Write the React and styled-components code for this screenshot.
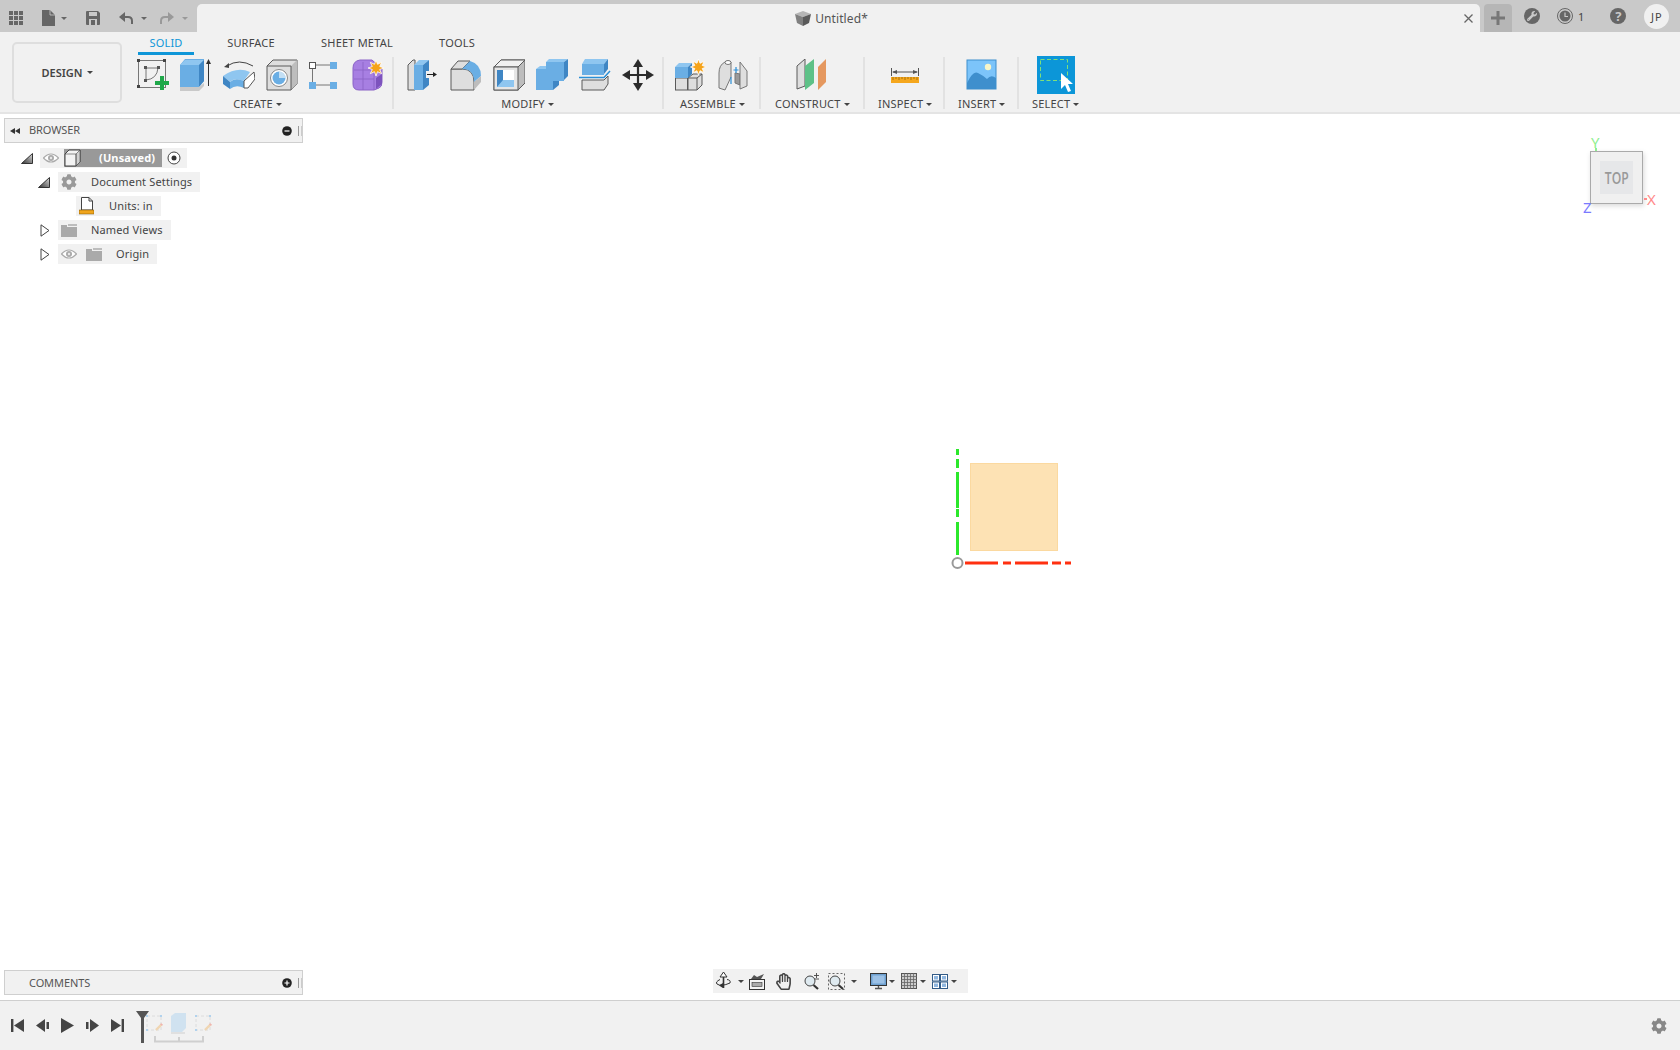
import React from 'react';
import styled, { createGlobalStyle } from 'styled-components';
import { FaCog, FaWrench, FaRegHandPaper } from 'react-icons/fa';

const GlobalStyle = createGlobalStyle`
  html, body {
    margin: 0;
    padding: 0;
    background: #ffffff;
    font-family: "Noto Sans", "Open Sans", sans-serif;
  }
`;

const Page = styled.div`
  width: 1680px;
  height: 1050px;
  display: flex;
  flex-direction: column;
  overflow: hidden;
  color: #444;
`;

/* top bar */
const TitleBar = styled.div`
  height: 32px;
  flex: none;
  background: #c9c9c9;
  display: flex;
  align-items: flex-end;
`;

const QuickTools = styled.div`
  width: 197px;
  height: 28px;
  flex: none;
  display: flex;
  align-items: center;
  padding-left: 9px;
  box-sizing: border-box;
`;

const QuickGroup = styled.div`
  display: flex;
  align-items: center;
  gap: 6px;
  margin-left: ${(p) => p.$ml || 0}px;
`;

const DocTab = styled.div`
  width: 1283px;
  height: 28px;
  flex: none;
  background: #f1f1f1;
  border-radius: 5px 5px 0 0;
  display: flex;
  align-items: center;
`;

const TabSide = styled.div`
  flex: 1;
  display: flex;
  justify-content: flex-end;
  padding-right: 6px;
`;

const DocTitle = styled.div`
  display: flex;
  align-items: center;
  gap: 4px;
  font-size: 12px;
  letter-spacing: 0.1px;
  color: #555;
  margin-right: 14px;
`;

const NewTab = styled.div`
  width: 28px;
  height: 28px;
  flex: none;
  margin-left: 4px;
  background: #b6b6b6;
  border-radius: 4px 4px 0 0;
  display: flex;
  align-items: center;
  justify-content: center;
`;

const BarRight = styled.div`
  flex: 1;
  height: 32px;
  display: flex;
  align-items: center;
`;

const RoundIcon = styled.div`
  width: 16px;
  height: 16px;
  border-radius: 50%;
  background: #666;
  color: #c9c9c9;
  display: flex;
  align-items: center;
  justify-content: center;
  font-size: 13px;
  font-weight: 700;
  margin-left: ${(p) => p.$ml}px;
`;

const JobCount = styled.div`
  display: flex;
  align-items: center;
  gap: 5px;
  margin-left: 17px;
  font-size: 11px;
  color: #444;
`;

const Avatar = styled.div`
  width: 25px;
  height: 25px;
  border-radius: 50%;
  background: #f0f0f0;
  margin-left: 18px;
  display: flex;
  align-items: center;
  justify-content: center;
  font-size: 11px;
  letter-spacing: 1px;
  color: #444;
`;

/* ribbon */
const Ribbon = styled.div`
  height: 82px;
  flex: none;
  box-sizing: border-box;
  background: #f1f1f1;
  border-bottom: 2px solid #e4e4e4;
  display: flex;
  padding-left: 12px;
`;

const WorkspaceButton = styled.div`
  width: 110px;
  height: 61px;
  margin-top: 10px;
  box-sizing: border-box;
  border: 2px solid #dedede;
  border-radius: 5px;
  display: flex;
  align-items: center;
  justify-content: center;
  gap: 4px;
  font-size: 11px;
  font-weight: 600;
  color: #444;
`;

const RibbonMain = styled.div`
  display: flex;
  flex-direction: column;
  margin-left: 7px;
`;

const TabRow = styled.div`
  height: 23px;
  display: flex;
  padding-left: 9px;
`;

const RibbonTab = styled.div`
  width: ${(p) => p.$w}px;
  margin-right: ${(p) => p.$mr}px;
  box-sizing: border-box;
  text-align: center;
  font-size: 11px;
  letter-spacing: 0.2px;
  line-height: 21px;
  color: ${(p) => (p.$active ? '#0e96d8' : '#444')};
  border-bottom: 3px solid ${(p) => (p.$active ? '#0e96d8' : 'transparent')};
`;

const GroupRow = styled.div`
  display: flex;
  margin-top: 2px;
`;

const ToolGroup = styled.div`
  width: ${(p) => p.$w}px;
  height: 52px;
  box-sizing: border-box;
  padding-left: ${(p) => p.$pl}px;
  border-right: ${(p) => (p.$last ? 'none' : '2px solid #e2e2e2')};
  display: flex;
  flex-direction: column;
  align-items: flex-start;
`;

const ToolStack = styled.div`
  display: flex;
  flex-direction: column;
  align-items: center;
`;

const ToolIcons = styled.div`
  height: ${(p) => (p.$tall ? 38 : 36)}px;
  display: flex;
  align-items: center;
  gap: 11px;
  margin-top: ${(p) => (p.$tall ? -1 : 0)}px;
`;

const GroupLabel = styled.div`
  display: flex;
  align-items: center;
  gap: 3px;
  margin-top: ${(p) => (p.$tall ? 2 : 3)}px;
  margin-right: ${(p) => p.$mr || 0}px;
  font-size: 11px;
  letter-spacing: 0.2px;
  line-height: 16px;
  color: #444;
`;

const Caret = styled.span`
  width: 0;
  height: 0;
  flex: none;
  margin-left: ${(p) => p.$ml || 0}px;
  border-left: ${(p) => p.$s || 3}px solid transparent;
  border-right: ${(p) => p.$s || 3}px solid transparent;
  border-top: ${(p) => p.$s || 3}px solid ${(p) => p.$c || '#444'};
`;

/* canvas */
const Canvas = styled.div`
  flex: 1;
  position: relative;
  display: flex;
  flex-direction: column;
  justify-content: space-between;
  background: #ffffff;
`;

const SidePanel = styled.div`
  width: 299px;
  margin-left: 4px;
  margin-top: ${(p) => p.$mt || 0}px;
  display: flex;
  flex-direction: column;
`;

const PanelHeader = styled.div`
  height: 25px;
  box-sizing: border-box;
  background: #f1f1f1;
  border: 1px solid #cfcfcf;
  display: flex;
  align-items: center;
  font-size: 11px;
  letter-spacing: -0.1px;
  color: #555;
  padding-left: 5px;
`;

const PanelTitle = styled.div`
  flex: 1;
  margin-left: ${(p) => p.$ml}px;
  margin-bottom: ${(p) => p.$mb || 0}px;
`;

const Grip = styled.span`
  width: 2px;
  height: 10px;
  margin-left: 6px;
  border-left: 1px solid #999;
  border-right: 1px solid #ccc;
`;

const Tree = styled.div`
  display: flex;
  flex-direction: column;
  align-items: flex-start;
  gap: 4px;
  margin-top: 5px;
`;

const TreeLine = styled.div`
  height: 20px;
  display: flex;
  align-items: center;
  padding-left: ${(p) => p.$indent}px;
`;

const Toggle = styled.div`
  width: ${(p) => p.$w}px;
  display: flex;
  align-items: center;
  flex: none;
`;

const NodeBox = styled.div`
  height: 20px;
  display: flex;
  align-items: center;
  background: #f1f1f1;
  padding: 0 ${(p) => p.$pr || 8}px 0 3px;
  font-size: 11px;
  letter-spacing: 0.15px;
  color: #444;
`;

const NodeLabel = styled.span`
  margin-left: ${(p) => p.$ml}px;
  margin-bottom: 1px;
`;

const NodeIcon = styled.div`
  display: flex;
  margin-left: ${(p) => p.$ml}px;
`;

const RootLabel = styled.div`
  height: 18px;
  width: 98px;
  display: flex;
  align-items: center;
  background: #999;
  color: #fff;
  font-weight: 700;
  margin-left: 5px;
`;

const RootText = styled.span`
  margin-left: 17px;
  margin-bottom: 1px;
`;

const GearBox = styled.div`
  display: flex;
  color: #999;
  font-size: 16px;
`;

const BottomRow = styled.div`
  display: grid;
  grid-template-columns: 1fr auto 1fr;
  align-items: start;
  padding-bottom: 5px;
`;

const NavBar = styled.div`
  height: 24px;
  margin-top: -1px;
  background: #f1f1f1;
  display: flex;
  align-items: center;
  padding: 0 11px 0 2px;
`;

const NavItem = styled.div`
  display: flex;
  align-items: center;
  gap: ${(p) => p.$gap || 6}px;
  margin-left: ${(p) => p.$ml || 0}px;
  font-size: 17px;
  color: #444;
`;

const ViewCube = styled.div`
  position: absolute;
  left: 1590px;
  top: 37px;
  width: 53px;
  height: 53px;
  box-sizing: border-box;
  border: 1px solid #aaa;
  background: #f0f0f0;
  box-shadow: 1px 2px 5px rgba(0, 0, 0, 0.15);
  display: flex;
  align-items: center;
  justify-content: center;
`;

const CubeFace = styled.div`
  width: 33px;
  height: 33px;
  background: #e6e7e9;
  display: flex;
  align-items: center;
  justify-content: center;
`;

const CubeText = styled.span`
  display: block;
  font-family: "Open Sans", sans-serif;
  font-size: 16px;
  font-weight: 600;
  color: #999;
  transform: scaleX(0.76);
`;

const AxisLetter = styled.span`
  position: absolute;
  left: ${(p) => p.$x}px;
  top: ${(p) => p.$y}px;
  font-size: 15px;
  line-height: 15px;
  color: ${(p) => p.$c};
`;

const AxisTick = styled.span`
  position: absolute;
  left: ${(p) => p.$x}px;
  top: ${(p) => p.$y}px;
  width: ${(p) => p.$w}px;
  height: ${(p) => p.$h}px;
  background: ${(p) => p.$c};
`;

const SketchLayer = styled.svg`
  position: absolute;
  left: 940px;
  top: 326px;
`;

/* timeline */
const Timeline = styled.div`
  height: 50px;
  flex: none;
  box-sizing: border-box;
  background: #f1f1f1;
  border-top: 1px solid #cfcfcf;
  display: flex;
  align-items: center;
  padding-left: 11px;
`;

const TimelineControls = styled.div`
  display: flex;
  align-items: center;
  gap: 12px;
`;

const TimelineFeatures = styled.svg`
  margin-left: 12px;
  margin-top: 2px;
`;

const TimelineGear = styled.div`
  margin-left: auto;
  margin-right: 13px;
  display: flex;
  color: #888;
  font-size: 16px;
`;

/* drawings */
const Ico = ({ w = 32, h = 32, children }) => (
  <svg width={w} height={h} viewBox={`0 0 ${w} ${h}`} fill="none">
    {children}
  </svg>
);

const B1 = '#6aaee4';
const B2 = '#8fc6f0';
const B3 = '#3f86c4';
const G1 = '#dedede';
const G2 = '#bdbdbd';
const LN = '#5a5a5a';

const Star = ({ x, y, r = 8 }) => {
  const pts = [];
  for (let i = 0; i < 16; i++) {
    const a = (i * Math.PI) / 8;
    const d = i % 2 ? r * 0.5 : r;
    pts.push(`${x + d * Math.cos(a)},${y + d * Math.sin(a)}`);
  }
  return <polygon points={pts.join(' ')} fill="#f5a31a" stroke="#fff" strokeWidth="0.8" />;
};

const SketchIcon = () => (
  <Ico>
    <rect x="1.5" y="1.5" width="27" height="27" stroke="#777" />
    {[[0, 0], [26, 0], [0, 26]].map(([x, y]) => (
      <rect key={x + '-' + y} x={x} y={y} width="3" height="3" fill="#444" />
    ))}
    <path d="M9 9H21M9 9V21M9 21Q20 20 21 9" stroke="#777" />
    {[[7, 7], [20, 7], [7, 20]].map(([x, y]) => (
      <rect key={x + '-' + y} x={x} y={y} width="3" height="3" fill="#555" />
    ))}
    <path d="M25 17V31M18 24H32" stroke="#1fa84a" strokeWidth="4" />
  </Ico>
);

const ExtrudeIcon = () => (
  <Ico>
    <polygon points="0,6 5,0 24,0 24,22 19,28 0,28" fill={B1} />
    <polygon points="0,6 5,1 24,1 19,6" fill={B2} />
    <polygon points="19,6 24,1 24,22 19,28" fill={B3} />
    <polygon points="0,28 19,28 24,24 24,27 19,32 0,32" fill="#c9c9c9" />
    <path d="M28.5 27V3" stroke="#333" />
    <polygon points="28.5,0 26,5 31,5" fill="#333" />
  </Ico>
);

const RevolveIcon = () => (
  <Ico>
    <path d="M4 7Q16 -1 30 7" stroke="#444" />
    <polygon points="1,8 6,4 6,9" fill="#444" />
    <path d="M0 17Q14 7 27 13L21 22Q11 18 7 23Z" fill={B2} />
    <path d="M0 17L7 23L7 30L0 25Z" fill={B3} />
    <path d="M7 23Q12 18 21 22V29Q13 25 7 30Z" fill={B1} />
    <polygon points="21,22 31,13 32,20 25,29 21,29" fill="#fff" stroke="#555" />
  </Ico>
);

const HoleIcon = () => (
  <Ico>
    <polygon points="1,7 7,1 31,1 31,25 25,31 1,31" fill={G1} stroke={LN} />
    <polygon points="25,7 31,1 31,25 25,31" fill={G2} />
    <path d="M1 7H25V31" stroke={LN} />
    <circle cx="13" cy="19" r="8.5" fill="#fff" stroke="#888" />
    <circle cx="13" cy="19" r="6.5" fill={B1} />
    <path d="M13 12.5A6.5 6.5 0 0 1 19.5 19L13 19Z" fill="#fff" opacity="0.6" />
  </Ico>
);

const PatternIcon = () => (
  <Ico>
    <path d="M7 6H21M3.5 9V23M7 26H21" stroke="#777" />
    <rect x="0.5" y="3.5" width="6" height="6" fill="#fff" stroke="#555" />
    <rect x="21" y="3" width="7" height="7" fill={B1} />
    <rect x="0" y="23" width="7" height="7" fill={B1} />
    <rect x="21" y="23" width="7" height="7" fill={B1} />
  </Ico>
);

const FormIcon = () => (
  <Ico>
    <path d="M1 9Q1 2 8 1H20L30 10V23Q30 28 27 29L22 31H7Q1 31 1 25Z" fill="#a77fe2" stroke="#8a62c6" />
    <path d="M2 11H22M2 20H22M11 3V31M22 10V31" stroke="#8a62c6" opacity="0.8" />
    <polygon points="24,19 30,15 30,25 24,30" fill="#7d53bd" />
    <Star x={24} y={9} />
  </Ico>
);

const PressPullIcon = () => (
  <Ico>
    <polygon points="1,6 6,1 8,1 8,31 1,31" fill={G1} stroke={LN} />
    <polygon points="7,6 12,1 22,1 16,6" fill={B2} />
    <rect x="7" y="6" width="9" height="25" fill={B1} />
    <polygon points="16,6 22,1 22,26 16,31" fill={B3} />
    <rect x="19" y="12" width="11" height="7" fill="#f1f1f1" />
    <path d="M20 15.5H27" stroke="#222" />
    <polygon points="26,13 30,15.5 26,18" fill="#222" />
  </Ico>
);

const FilletIcon = () => (
  <Ico>
    <path d="M1 10H12Q24 10 24 23V31H1Z" fill={G1} stroke={LN} />
    <path d="M1 10L8 2H20L12 10Z" fill={G1} stroke={LN} />
    <path d="M12 10L20 2Q31 5 31 17L24 23Q24 10 12 10Z" fill={B1} />
    <path d="M24 23L31 17V23L24 31Z" fill={G2} />
  </Ico>
);

const ShellIcon = () => (
  <Ico>
    <polygon points="1,8 8,1 32,1 32,24 25,31 1,31" fill={G2} stroke={LN} />
    <polygon points="1,8 8,1 32,1 25,8" fill="#f1f1f1" stroke={LN} />
    <rect x="1" y="8" width="24" height="23" fill="#e6e6e6" stroke={LN} />
    <rect x="4" y="11" width="17" height="17" fill={B3} />
    <polygon points="10,11 21,11 21,21 10,21" fill="#fff" />
    <polygon points="10,21 21,21 21,28 4,28" fill={B2} />
  </Ico>
);

const CombineIcon = () => (
  <Ico>
    <polygon points="10,3 13,0 32,0 28,3" fill={B2} />
    <polygon points="0,10 4,7 14,7 10,10" fill={B2} />
    <rect x="10" y="3" width="18" height="19" fill={B1} />
    <polygon points="28,3 32,0 32,17 28,21" fill={B3} />
    <rect x="0" y="10" width="17" height="21" fill={B1} />
    <polygon points="17,22 23,22 23,26 17,31" fill={B3} />
  </Ico>
);

const SplitIcon = () => (
  <Ico>
    <polygon points="3,5 6,0 29,0 25,5" fill={B2} />
    <rect x="3" y="5" width="22" height="11" fill={B1} />
    <polygon points="25,5 29,0 29,10 25,15" fill={B3} />
    <polygon points="3,21 25,21 29,17 29,25 25,31 3,31" fill={G1} stroke={LN} />
    <path d="M0 18.5H25L31 12" stroke="#2b8fd6" strokeWidth="1.5" />
  </Ico>
);

const MoveIcon = () => (
  <Ico>
    <path d="M16 5V27M5 16H27" stroke="#2b2b2b" strokeWidth="2.2" />
    <polygon points="16,0 11,8 21,8" fill="#2b2b2b" />
    <polygon points="16,32 11,24 21,24" fill="#2b2b2b" />
    <polygon points="0,16 8,11 8,21" fill="#2b2b2b" />
    <polygon points="32,16 24,11 24,21" fill="#2b2b2b" />
  </Ico>
);

const ComponentIcon = () => (
  <Ico>
    <rect x="0.5" y="19" width="12" height="12" fill={G1} stroke={LN} />
    <polygon points="13,19 18,15 27,15 27,26 22,31 13,31" fill={G1} stroke={LN} />
    <path d="M13 19H22V31M22 19L27 15" stroke={LN} />
    <polygon points="0,8 4,4 17,4 13,8" fill={B2} />
    <rect x="0" y="8" width="13" height="11" fill={B1} />
    <polygon points="13,8 17,4 17,15 13,19" fill={B3} />
    <Star x={23.5} y={8} />
  </Ico>
);

const JointIcon = () => (
  <Ico>
    <path d="M1 14Q1 6 7 3Q10 0 13 3V18L7 31L1 29Z" fill={G1} stroke="#777" />
    <ellipse cx="10" cy="3.5" rx="3" ry="2" fill="#fff" stroke="#777" />
    <path d="M17 14L22 15V26L17 24Z" fill="#9a9a9a" stroke="#777" />
    <path d="M22 3L29 12V27L22 30V15Z" fill={G1} stroke="#777" />
    <path d="M18 8V14M13 18V25" stroke="#2b8fd6" strokeWidth="1.2" />
    <path d="M15.5 11H20.5" stroke="#2b8fd6" />
  </Ico>
);

const ConstructIcon = () => (
  <Ico>
    <polygon points="1,7 9,0 9,27 1,30" fill={G1} stroke={LN} />
    <polygon points="9,7 18,0 18,24 9,31" fill="#5ec187" />
    <polygon points="22,8 30,0 30,23 22,31" fill="#e5985f" />
  </Ico>
);

const InspectIcon = () => (
  <Ico>
    <rect x="2" y="18" width="28" height="6" fill="#f5a71d" />
    <path d="M4 18V21M7 18V20M10 18V21M13 18V20M16 18V21M19 18V20M22 18V21M25 18V20M28 18V21" stroke="#8a5c00" strokeWidth="0.7" />
    <path d="M2.5 9V17M29.5 9V17M4 13H28" stroke="#555" />
    <polygon points="3,13 8,11 8,15" fill="#555" />
    <polygon points="29,13 24,11 24,15" fill="#555" />
  </Ico>
);

const InsertIcon = () => (
  <Ico>
    <rect x="1" y="1" width="29" height="29" fill="#7cc4fa" />
    <path d="M1 24Q7 11 12 14Q18 17 21 20Q25 15 30 19V30H1Z" fill="#3f8fcd" />
    <circle cx="22" cy="8" r="3.2" fill="#f7f5c9" />
    <rect x="1" y="1" width="29" height="29" stroke="#3f8fcd" />
  </Ico>
);

const SelectIcon = () => (
  <Ico w={38} h={38}>
    <rect width="38" height="38" fill="#0c96d8" />
    <rect x="3.5" y="3.5" width="27" height="21" stroke="#7fe07a" strokeDasharray="4 2.5" />
    <polygon points="24,17 24,33 28,29 31,36 34,35 31,28 36,28" fill="#fff" />
  </Ico>
);

const GridIcon = () => (
  <Ico w={14} h={14}>
    {[0, 5, 10].flatMap((x) =>
      [0, 5, 10].map((y) => <rect key={`${x}${y}`} x={x} y={y} width="4" height="4" fill="#666" />)
    )}
  </Ico>
);

const FileIcon = () => (
  <Ico w={13} h={16}>
    <path d="M0 0H8L13 5V16H0Z" fill="#666" />
    <path d="M8 0V5H13" stroke="#c9c9c9" strokeWidth="0.8" />
  </Ico>
);

const SaveIcon = () => (
  <Ico w={14} h={14}>
    <path d="M0 1Q0 0 1 0H12L14 2V13Q14 14 13 14H1Q0 14 0 13Z" fill="#666" />
    <rect x="3" y="1" width="8" height="4" fill="#c9c9c9" />
    <rect x="3" y="8" width="8" height="6" fill="#c9c9c9" />
    <rect x="5" y="9" width="4" height="5" fill="#666" />
  </Ico>
);

const UndoIcon = ({ c, flip }) => (
  <Ico w={14} h={14}>
    <g transform={flip ? 'matrix(-1 0 0 1 14 0)' : undefined}>
      <path d="M3 6H9Q13 6 13 10V13" stroke={c} strokeWidth="2" />
      <polygon points="0,6 6,1 6,11" fill={c} />
    </g>
  </Ico>
);

const CloseIcon = () => (
  <Ico w={11} h={11}>
    <path d="M1.5 1.5L9.5 9.5M9.5 1.5L1.5 9.5" stroke="#666" strokeWidth="1.3" />
  </Ico>
);

const PlusIcon = () => (
  <Ico w={14} h={14}>
    <path d="M7 0V14M0 7H14" stroke="#777" strokeWidth="3" />
  </Ico>
);

const DocCube = () => (
  <Ico w={16} h={15}>
    <polygon points="0,3 8,0 16,3 8,6" fill="#b5b5b5" />
    <polygon points="0,3 8,6 8,15 2,12" fill="#808080" />
    <polygon points="16,3 8,6 8,15 14,12" fill="#5a5a5a" />
  </Ico>
);

const ClockIcon = () => (
  <Ico w={16} h={16}>
    <circle cx="8" cy="8" r="7.5" stroke="#666" />
    <circle cx="8" cy="8" r="5.5" fill="#666" />
    <path d="M8 4.5V8.5H11" stroke="#c9c9c9" strokeWidth="1.2" />
  </Ico>
);

const CollapseIcon = () => (
  <Ico w={10} h={6}>
    <polygon points="0,3 5,0 5,6" fill="#333" />
    <polygon points="5,3 10,0 10,6" fill="#333" />
  </Ico>
);

const CircleSign = ({ plus }) => (
  <Ico w={10} h={10}>
    <circle cx="5" cy="5" r="4.8" fill="#222" />
    <path d={plus ? 'M2.5 5H7.5M5 2.5V7.5' : 'M2.5 5H7.5'} stroke="#fff" strokeWidth="1.2" />
  </Ico>
);

const TriOpen = () => (
  <Ico w={12} h={11}>
    <polygon points="11.5,0.5 11.5,10.5 0.5,10.5" fill="url(#triFill)" stroke="#333" />
    <defs>
      <linearGradient id="triFill" x1="0" y1="1" x2="1" y2="0">
        <stop offset="0" stopColor="#333" />
        <stop offset="1" stopColor="#ddd" />
      </linearGradient>
    </defs>
  </Ico>
);

const TriClosed = () => (
  <Ico w={10} h={13}>
    <polygon points="1,0.8 9,6.5 1,12.2" fill="#fff" stroke="#444" />
  </Ico>
);

const EyeIcon = () => (
  <Ico w={16} h={10}>
    <path d="M0.5 5Q8 -3 15.5 5Q8 13 0.5 5Z" fill="#fff" stroke="#aaa" strokeWidth="1.2" />
    <circle cx="8" cy="5" r="3" fill="#aaa" />
    <circle cx="8" cy="5" r="1.2" fill="#e8e8e8" />
  </Ico>
);

const BoxIcon = () => (
  <Ico w={18} h={18}>
    <polygon points="1,5 5,1 16,1 16,13 12,17 1,17" fill="#f3f3f3" stroke="#444" />
    <polygon points="12,5 16,1 16,13 12,17" fill="#d0d0d0" stroke="#444" strokeWidth="0.6" />
    <path d="M1 5H12V17" stroke="#444" strokeWidth="0.6" />
  </Ico>
);

const RadioIcon = () => (
  <Ico w={14} h={14}>
    <circle cx="7" cy="7" r="6" fill="#fff" stroke="#444" />
    <circle cx="7" cy="7" r="2.5" fill="#333" />
  </Ico>
);

const UnitsIcon = () => (
  <Ico w={15} h={18}>
    <path d="M2.5 0.5H10L13.5 4V13H2.5Z" fill="#fff" stroke="#444" />
    <path d="M10 0.5V4H13.5" stroke="#444" />
    <rect x="0" y="13" width="15" height="4" fill="#f0a51d" stroke="#7a5200" strokeWidth="0.5" />
  </Ico>
);

const FolderIcon = () => (
  <Ico w={16} h={13}>
    <path d="M0 1H6V3H16V13H0Z" fill="#aaa" />
    <path d="M7 0H16V2H7Z" fill="#bdbdbd" />
  </Ico>
);

const OrbitIcon = () => (
  <Ico w={17} h={18}>
    <path d="M8.5 2V16" stroke="#333" strokeWidth="1.6" />
    <polygon points="8.5,0 5,5 12,5" fill="#fff" stroke="#333" />
    <path d="M5 7.5Q0 10 2 12Q6 15 15 11Q16 8 12 7.5" stroke="#333" />
    <polygon points="8,11 4,13.5 8,16" fill="#333" />
  </Ico>
);

const LookIcon = () => (
  <Ico w={16} h={17}>
    <rect x="0.5" y="6.5" width="15" height="10" fill="#f3f3f3" stroke="#333" />
    <rect x="3" y="9.5" width="10" height="4" fill="#aaa" stroke="#333" strokeWidth="0.6" />
    <path d="M2 6L5 2L8 4L15 1L12 6" fill="#555" />
  </Ico>
);

const ZoomGlass = ({ extra }) => (
  <Ico w={17} h={17}>
    {extra}
    <circle cx="7" cy="8" r="5" fill="#dfeaf0" stroke="#444" />
    <path d="M10.5 12L15 16" stroke="#333" strokeWidth="2.2" />
  </Ico>
);

const DisplayIcon = () => (
  <Ico w={17} h={17}>
    <rect x="0.5" y="0.5" width="16" height="12" fill="#6ea0d0" stroke="#333" />
    <rect x="2.5" y="2.5" width="12" height="8" fill="#9cc1e6" />
    <path d="M5 15.5H12M8.5 13V15" stroke="#555" strokeWidth="1.4" />
  </Ico>
);

const GridDisplayIcon = () => (
  <Ico w={16} h={16}>
    <rect x="0.5" y="0.5" width="15" height="15" fill="#ccc" stroke="#555" />
    <path d="M3.5 0V16M6.5 0V16M9.5 0V16M12.5 0V16M0 3.5H16M0 6.5H16M0 9.5H16M0 12.5H16" stroke="#666" strokeWidth="0.8" />
  </Ico>
);

const ViewportsIcon = () => (
  <Ico w={16} h={15}>
    {[[0.5, 0.5], [8.5, 0.5], [0.5, 8], [8.5, 8]].map(([x, y]) => (
      <g key={`${x}${y}`}>
        <rect x={x} y={y} width="7" height="6.5" fill="#fff" stroke="#335c88" />
        <rect x={x + 1.5} y={y + 1.5} width="4" height="3.5" fill="#8fb6df" />
      </g>
    ))}
  </Ico>
);

const StepIcon = ({ kind }) => {
  const c = '#444';
  if (kind === 'first') {
    return (
      <Ico w={13} h={15}>
        <rect x="0" y="1" width="2.4" height="13" fill={c} />
        <polygon points="13,1 13,14 3,7.5" fill={c} />
      </Ico>
    );
  }
  if (kind === 'prev') {
    return (
      <Ico w={13} h={15}>
        <polygon points="9,1 9,14 0,7.5" fill={c} />
        <rect x="10.5" y="4" width="2.5" height="7" fill={c} />
      </Ico>
    );
  }
  if (kind === 'play') {
    return (
      <Ico w={13} h={15}>
        <polygon points="0,0 0,15 13,7.5" fill={c} />
      </Ico>
    );
  }
  if (kind === 'next') {
    return (
      <Ico w={13} h={15}>
        <rect x="0" y="4" width="2.5" height="7" fill={c} />
        <polygon points="4,1 4,14 13,7.5" fill={c} />
      </Ico>
    );
  }
  return (
    <Ico w={13} h={15}>
      <polygon points="0,1 0,14 10,7.5" fill={c} />
      <rect x="10.6" y="1" width="2.4" height="13" fill={c} />
    </Ico>
  );
};

const FadedSketch = ({ x }) => (
  <g transform={`translate(${x} 0)`} opacity="0.55" fill="none">
    <rect x="1" y="6" width="14" height="14" stroke="#ccc" strokeDasharray="3 2" />
    <rect x="0" y="5" width="2" height="2" fill="#7db9ea" />
    <rect x="14" y="5" width="2" height="2" fill="#7db9ea" />
    <rect x="0" y="19" width="2" height="2" fill="#7db9ea" />
    <path d="M10 20L16 14" stroke="#f0c080" strokeWidth="2.4" />
    <path d="M15 15L16 14" stroke="#f08080" strokeWidth="2.4" />
  </g>
);

const groups = [
  { label: 'CREATE', w: 265, pl: 8, mr: 6, icons: [SketchIcon, ExtrudeIcon, RevolveIcon, HoleIcon, PatternIcon, FormIcon] },
  { label: 'MODIFY', w: 270, pl: 13, mr: 6, icons: [PressPullIcon, FilletIcon, ShellIcon, CombineIcon, SplitIcon, MoveIcon] },
  { label: 'ASSEMBLE', w: 97, pl: 11, mr: 0, icons: [ComponentIcon, JointIcon] },
  { label: 'CONSTRUCT', w: 104, pl: 14, mr: 0, icons: [ConstructIcon] },
  { label: 'INSPECT', w: 80, pl: 13, mr: 0, icons: [InspectIcon] },
  { label: 'INSERT', w: 74, pl: 13, mr: 0, icons: [InsertIcon] },
];

const tabs = [
  { label: 'SOLID', w: 56, mr: 25, active: true },
  { label: 'SURFACE', w: 64, mr: 32 },
  { label: 'SHEET METAL', w: 84, mr: 34 },
  { label: 'TOOLS', w: 48, mr: 0 },
];

const App = () => {
  return (
    <Page>
      <GlobalStyle />
      <TitleBar>
        <QuickTools>
          <GridIcon />
          <QuickGroup $ml={19}>
            <FileIcon />
            <Caret $s={3.5} $c="#666" />
          </QuickGroup>
          <QuickGroup $ml={19}>
            <SaveIcon />
          </QuickGroup>
          <QuickGroup $ml={19}>
            <UndoIcon c="#666" />
            <Caret $s={3.5} $c="#666" $ml={2} />
          </QuickGroup>
          <QuickGroup $ml={13}>
            <UndoIcon c="#999" flip />
            <Caret $s={3.5} $c="#999" $ml={2} />
          </QuickGroup>
        </QuickTools>
        <DocTab>
          <TabSide />
          <DocTitle>
            <DocCube />
            Untitled*
          </DocTitle>
          <TabSide>
            <CloseIcon />
          </TabSide>
        </DocTab>
        <NewTab>
          <PlusIcon />
        </NewTab>
        <BarRight>
          <RoundIcon $ml={12}>
            <FaWrench size={10} />
          </RoundIcon>
          <JobCount>
            <ClockIcon />1
          </JobCount>
          <RoundIcon $ml={26}>?</RoundIcon>
          <Avatar>JP</Avatar>
        </BarRight>
      </TitleBar>

      <Ribbon>
        <WorkspaceButton>
          DESIGN <Caret />
        </WorkspaceButton>
        <RibbonMain>
          <TabRow>
            {tabs.map((t) => (
              <RibbonTab key={t.label} $w={t.w} $mr={t.mr} $active={t.active}>
                {t.label}
              </RibbonTab>
            ))}
          </TabRow>
          <GroupRow>
            {groups.map((g) => (
              <ToolGroup key={g.label} $w={g.w} $pl={g.pl}>
                <ToolStack>
                  <ToolIcons>
                    {g.icons.map((Icon, i) => (
                      <Icon key={i} />
                    ))}
                  </ToolIcons>
                  <GroupLabel $mr={g.mr}>
                    {g.label} <Caret />
                  </GroupLabel>
                </ToolStack>
              </ToolGroup>
            ))}
            <ToolGroup $w={70} $pl={13} $last>
              <ToolStack>
                <ToolIcons $tall>
                  <SelectIcon />
                </ToolIcons>
                <GroupLabel $tall>
                  SELECT <Caret />
                </GroupLabel>
              </ToolStack>
            </ToolGroup>
          </GroupRow>
        </RibbonMain>
      </Ribbon>

      <Canvas>
        <SidePanel $mt={4}>
          <PanelHeader>
            <CollapseIcon />
            <PanelTitle $ml={9} $mb={2}>BROWSER</PanelTitle>
            <CircleSign />
            <Grip />
          </PanelHeader>
          <Tree>
            <TreeLine $indent={17}>
              <Toggle $w={19}>
                <TriOpen />
              </Toggle>
              <NodeBox $pr={6}>
                <EyeIcon />
                <RootLabel>
                  <BoxIcon />
                  <RootText>(Unsaved)</RootText>
                </RootLabel>
                <NodeIcon $ml={5}>
                  <RadioIcon />
                </NodeIcon>
              </NodeBox>
            </TreeLine>
            <TreeLine $indent={34}>
              <Toggle $w={20}>
                <TriOpen />
              </Toggle>
              <NodeBox>
                <GearBox>
                  <FaCog />
                </GearBox>
                <NodeLabel $ml={14}>Document Settings</NodeLabel>
              </NodeBox>
            </TreeLine>
            <TreeLine $indent={72}>
              <NodeBox>
                <UnitsIcon />
                <NodeLabel $ml={15}>Units: in</NodeLabel>
              </NodeBox>
            </TreeLine>
            <TreeLine $indent={36}>
              <Toggle $w={18}>
                <TriClosed />
              </Toggle>
              <NodeBox>
                <FolderIcon />
                <NodeLabel $ml={14}>Named Views</NodeLabel>
              </NodeBox>
            </TreeLine>
            <TreeLine $indent={36}>
              <Toggle $w={18}>
                <TriClosed />
              </Toggle>
              <NodeBox>
                <EyeIcon />
                <NodeIcon $ml={9}>
                  <FolderIcon />
                </NodeIcon>
                <NodeLabel $ml={14}>Origin</NodeLabel>
              </NodeBox>
            </TreeLine>
          </Tree>
        </SidePanel>

        <ViewCube>
          <CubeFace>
            <CubeText>TOP</CubeText>
          </CubeFace>
          <AxisTick $x={4} $y={-4} $w={2} $h={3} $c="#8fef8f" />
          <AxisLetter $x={0} $y={-17} $c="#8fef8f">Y</AxisLetter>
          <AxisTick $x={53} $y={46} $w={3} $h={2} $c="#ff8a8a" />
          <AxisLetter $x={56} $y={40} $c="#ff8a8a">X</AxisLetter>
          <AxisLetter $x={-8} $y={48} $c="#7a7aff">Z</AxisLetter>
        </ViewCube>

        <SketchLayer width="140" height="130" viewBox="0 0 140 130">
          <rect x="30.5" y="23.5" width="87" height="87" fill="#fde2b4" stroke="#fbd9a0" />
          <path d="M17.5 9V15M17.5 19V28M17.5 32V68M17.5 69V77M17.5 82V115" stroke="#2be82b" strokeWidth="3" />
          <path d="M25 123H58M63 123H71M75 123H108M112 123H121M125 123H131" stroke="#ff3010" strokeWidth="3" />
          <circle cx="17.5" cy="123" r="5" fill="#fff" stroke="#999" strokeWidth="2" />
        </SketchLayer>

        <BottomRow>
          <SidePanel>
            <PanelHeader>
              <PanelTitle $ml={19}>COMMENTS</PanelTitle>
              <CircleSign plus />
              <Grip />
            </PanelHeader>
          </SidePanel>
          <NavBar>
            <NavItem>
              <OrbitIcon />
              <Caret />
            </NavItem>
            <NavItem $ml={5}>
              <LookIcon />
            </NavItem>
            <NavItem $ml={10}>
              <FaRegHandPaper />
            </NavItem>
            <NavItem $ml={11}>
              <ZoomGlass extra={<path d="M11 2.5H16M13.5 0V5M11 6H16" stroke="#444" strokeWidth="0.9" />} />
            </NavItem>
            <NavItem $ml={8}>
              <ZoomGlass extra={<rect x="0.5" y="0.5" width="16" height="16" stroke="#666" strokeDasharray="2 2" />} />
              <Caret />
            </NavItem>
            <NavItem $ml={13} $gap={2}>
              <DisplayIcon />
              <Caret />
            </NavItem>
            <NavItem $ml={6} $gap={3}>
              <GridDisplayIcon />
              <Caret />
            </NavItem>
            <NavItem $ml={6} $gap={3}>
              <ViewportsIcon />
              <Caret />
            </NavItem>
          </NavBar>
        </BottomRow>
      </Canvas>

      <Timeline>
        <TimelineControls>
          {['first', 'prev', 'play', 'next', 'last'].map((k) => (
            <StepIcon key={k} kind={k} />
          ))}
        </TimelineControls>
        <TimelineFeatures width="76" height="34" viewBox="0 0 76 34" fill="none">
          <polygon points="0,1 13,1 8,8 8,9 5,9 5,8" fill="#555" />
          <rect x="5" y="8" width="3" height="25" fill="#555" />
          <FadedSketch x={10} />
          <g opacity="0.45">
            <polygon points="35,6 39,3 50,3 50,18 46,22 35,22" fill="#a9d0f0" />
            <rect x="35" y="22" width="14" height="2" fill="#ccc" />
          </g>
          <FadedSketch x={59} />
          <path d="M19 26V31.5H67V26M43 27V31.5" stroke="#cfcfcf" strokeWidth="2" />
        </TimelineFeatures>
        <TimelineGear>
          <FaCog />
        </TimelineGear>
      </Timeline>
    </Page>
  );
};

export default App;
